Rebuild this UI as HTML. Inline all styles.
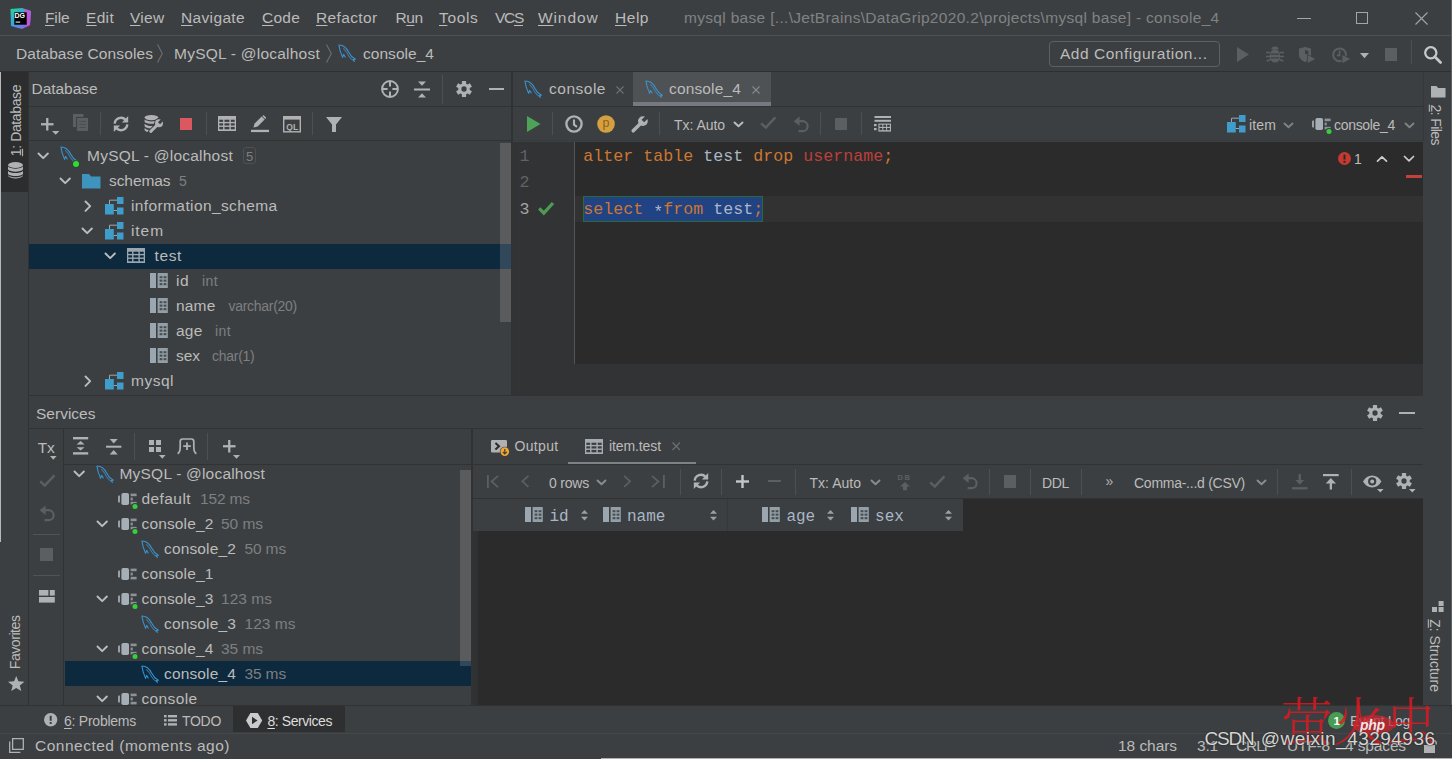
<!DOCTYPE html>
<html><head><meta charset="utf-8"><title>DataGrip</title>
<style>
html,body{margin:0;padding:0;background:#3c3f41;overflow:hidden}
#r{position:relative;width:1452px;height:759px;overflow:hidden;background:#3c3f41}
#r>div,#r>span,#r>svg{position:absolute}
#r>span{white-space:pre;line-height:20px;height:20px}
#r>svg{overflow:visible}
#r>span{text-underline-offset:2px}
u{text-decoration:underline;text-underline-offset:inherit;text-decoration-thickness:1px}
</style></head><body><div id="r">
<div style="left:0px;top:35px;width:1452px;height:1px;background:#4f5254;"></div>
<div style="left:0px;top:71px;width:1452px;height:1px;background:#2d2f30;"></div>
<div style="left:0px;top:72px;width:28px;height:633px;background:#3c3f41;"></div>
<div style="left:28px;top:72px;width:1px;height:633px;background:#323232;"></div>
<div style="left:0px;top:72px;width:28px;height:120px;background:#2b2d2e;"></div>
<div style="left:1423px;top:72px;width:1px;height:69px;background:#353739;"></div>
<div style="left:29px;top:106px;width:483px;height:1px;background:#323232;"></div>
<div style="left:29px;top:140px;width:483px;height:1px;background:#323232;"></div>
<div style="left:29px;top:244px;width:483px;height:25px;background:#0d293e;"></div>
<div style="left:500px;top:143px;width:10.5px;height:179px;background:rgba(255,255,255,0.15);"></div>
<div style="left:511px;top:72px;width:2px;height:324px;background:#323232;"></div>
<div style="left:633px;top:72px;width:138px;height:35px;background:#4e5254;"></div>
<div style="left:633px;top:102px;width:138px;height:4px;background:#747a80;"></div>
<div style="left:513px;top:106px;width:910px;height:1px;background:#323232;"></div>
<div style="left:513px;top:140px;width:910px;height:1px;background:#393c3e;"></div>
<div style="left:513px;top:141.5px;width:910px;height:222.5px;background:#2b2b2b;"></div>
<div style="left:513px;top:141.5px;width:61px;height:222.5px;background:#313335;"></div>
<div style="left:574px;top:141.5px;width:1px;height:222.5px;background:#555555;"></div>
<div style="left:575px;top:195.5px;width:848px;height:26px;background:#323232;"></div>
<div style="left:583px;top:195.5px;width:180px;height:26px;background:#214283;box-shadow:inset 0 0 0 1px #2b6a38"></div>
<div style="left:1406px;top:175px;width:16px;height:3px;background:#c4403c;"></div>
<div style="left:513px;top:364px;width:910px;height:32px;background:#313335;"></div>
<div style="left:29px;top:395px;width:1394px;height:1px;background:#323232;"></div>
<div style="left:29px;top:428px;width:1394px;height:1px;background:#323232;"></div>
<div style="left:63px;top:429px;width:1px;height:276px;background:#323232;"></div>
<div style="left:64px;top:464px;width:408px;height:1px;background:#323232;"></div>
<div style="left:33px;top:534px;width:27px;height:1px;background:#515456;"></div>
<div style="left:33px;top:575px;width:27px;height:1px;background:#515456;"></div>
<div style="left:65px;top:661px;width:406px;height:25px;background:#0d293e;"></div>
<div style="left:460px;top:470px;width:10.5px;height:196px;background:rgba(255,255,255,0.15);"></div>
<div style="left:471px;top:429px;width:2px;height:276px;background:#323232;"></div>
<div style="left:473px;top:464px;width:950px;height:1px;background:#323232;"></div>
<div style="left:568px;top:461.6px;width:128px;height:2.6px;background:#7d8285;"></div>
<div style="left:473px;top:498px;width:950px;height:1px;background:#323232;"></div>
<div style="left:473px;top:499px;width:950px;height:206px;background:#2b2b2b;"></div>
<div style="left:473px;top:499px;width:490px;height:32px;background:#3c3f41;"></div>
<div style="left:727px;top:499px;width:1px;height:32px;background:#36393b;"></div>
<div style="left:473px;top:531px;width:5px;height:174px;background:#2f3133;"></div>
<div style="left:0px;top:705px;width:1452px;height:1px;background:#323232;"></div>
<div style="left:232.5px;top:706px;width:112px;height:26px;background:#2d2f30;"></div>
<div style="left:0px;top:732.5px;width:1452px;height:1px;background:#45484a;"></div>
<div style="left:1049px;top:40.5px;width:170.5px;height:26.5px;background:transparent;border:1px solid #5e6163;border-radius:4px;box-sizing:border-box"></div>
<div style="left:243px;top:147px;width:13px;height:17px;background:transparent;border:1px solid #4e5153;border-radius:3px;box-sizing:border-box"></div>
<div style="left:0px;top:72px;width:1px;height:470px;background:#b5b9bb;"></div>
<div style="left:601px;top:757.6px;width:851px;height:1.4px;background:#b0b0b0;"></div>
<div style="left:1450.5px;top:0px;width:1.5px;height:705px;background:#5e6163;"></div>
<div style="left:1297px;top:18.3px;width:13.7px;height:1px;background:#a3a5a7;"></div>
<div style="left:1355.7px;top:11.7px;width:12.4px;height:12.4px;background:transparent;border:1px solid #a3a5a7;box-sizing:border-box"></div>
<div style="left:1384.5px;top:48px;width:12.5px;height:12.5px;background:#5c5f61;"></div>
<div style="left:1411px;top:40px;width:1px;height:24px;background:#4d5052;"></div>
<div style="left:442px;top:75px;width:1px;height:29px;background:#4d5052;"></div>
<div style="left:488.5px;top:88px;width:15.5px;height:2px;background:#afb1b3;"></div>
<div style="left:100px;top:112px;width:1px;height:23px;background:#4d5052;"></div>
<div style="left:180px;top:117.8px;width:12.3px;height:12.3px;background:#db5860;"></div>
<div style="left:206px;top:112px;width:1px;height:23px;background:#4d5052;"></div>
<div style="left:312px;top:112px;width:1px;height:23px;background:#4d5052;"></div>
<div style="left:552px;top:112px;width:1px;height:23px;background:#4d5052;"></div>
<div style="left:659px;top:112px;width:1px;height:23px;background:#4d5052;"></div>
<div style="left:820px;top:112px;width:1px;height:23px;background:#4d5052;"></div>
<div style="left:835px;top:117.8px;width:12.3px;height:12.3px;background:#5c5f61;"></div>
<div style="left:861px;top:112px;width:1px;height:23px;background:#4d5052;"></div>
<div style="left:1399px;top:412px;width:15.7px;height:2px;background:#afb1b3;"></div>
<div style="left:39.6px;top:548.4px;width:13px;height:12.6px;background:#5c5f61;"></div>
<div style="left:134px;top:433px;width:1px;height:27px;background:#4d5052;"></div>
<div style="left:207px;top:433px;width:1px;height:27px;background:#4d5052;"></div>
<div style="left:29px;top:705px;width:1423px;height:1px;background:#323232;"></div>
<div style="left:680px;top:469px;width:1px;height:26px;background:#4d5052;"></div>
<div style="left:721px;top:469px;width:1px;height:26px;background:#4d5052;"></div>
<div style="left:768px;top:480.3px;width:13.4px;height:2.2px;background:#5c5f61;"></div>
<div style="left:795px;top:469px;width:1px;height:26px;background:#4d5052;"></div>
<div style="left:989px;top:469px;width:1px;height:26px;background:#4d5052;"></div>
<div style="left:1003.6px;top:475.3px;width:12.6px;height:12.3px;background:#5c5f61;"></div>
<div style="left:1030px;top:469px;width:1px;height:26px;background:#4d5052;"></div>
<div style="left:1081px;top:469px;width:1px;height:26px;background:#4d5052;"></div>
<div style="left:1277px;top:469px;width:1px;height:26px;background:#4d5052;"></div>
<div style="left:1351px;top:469px;width:1px;height:26px;background:#4d5052;"></div>
<svg style="left:9.5px;top:7.5px;" width="21" height="21" viewBox="0 0 21 21"><defs><linearGradient id="dg1" x1="0" y1="0" x2="1" y2="1"><stop offset="0" stop-color="#22d88f"/><stop offset="0.5" stop-color="#3f9be6"/><stop offset="1" stop-color="#b44ee0"/></linearGradient></defs>
<path d="M0.5 1 L12 0 L21 3 L20 17 L12 21 L1 18 Z" fill="url(#dg1)"/><path d="M14 1 L21 3 L20 17 L16 19 Z" fill="#d04fd4" opacity="0.8"/>
<rect x="4.3" y="4.3" width="12.4" height="12.4" fill="#000"/><rect x="5.6" y="13.6" width="4.6" height="1" fill="#fff"/></svg>
<svg style="left:157px;top:44px;" width="6" height="19" viewBox="0 0 6 19"><path d="M0.5 0.5 L5.3 9.5 L0.5 18.5" fill="none" stroke="#6c6f71" stroke-width="1.1"/></svg>
<svg style="left:325.5px;top:44px;" width="6" height="19" viewBox="0 0 6 19"><path d="M0.5 0.5 L5.3 9.5 L0.5 18.5" fill="none" stroke="#6c6f71" stroke-width="1.1"/></svg>
<svg style="left:337.5px;top:43.5px;" width="18" height="18" viewBox="0 0 18 18"><g fill="none" stroke="#3b93cf" stroke-width="1.05" stroke-linecap="round" stroke-linejoin="round"><path d="M1 1 C5 1 8.6 4 10.6 8 C12 11 14 13.4 17.4 15.2 L15 15.4 L16.4 17.2"/><path d="M1 1.4 C1.4 5 2.6 9 4.6 13.4 L5.6 10.4 L7.2 13"/><path d="M5.6 4.6 C8 6.6 9.4 9.4 10.8 12 C12.2 14.2 14 16 16.4 17.2" opacity="0.75"/></g></svg>
<svg style="left:1414.5px;top:11.6px;" width="13" height="13" viewBox="0 0 13 13"><path d="M0.5 0.5 L12.5 12.5 M12.5 0.5 L0.5 12.5" stroke="#a3a5a7" stroke-width="1.1" fill="none"/></svg>
<svg style="left:1237px;top:46.5px;" width="12" height="15" viewBox="0 0 12 15"><path d="M0 0 L12 7.5 L0 15 Z" fill="#5c5f61"/></svg>
<svg style="left:1265.5px;top:45.5px;" width="18" height="17" viewBox="0 0 18 17"><g fill="#5c5f61"><ellipse cx="9" cy="10" rx="5.2" ry="6.6"/><path d="M5.4 3.6 A3.6 3 0 0 1 12.6 3.6 Z"/></g><g stroke="#5c5f61" stroke-width="1.6" fill="none"><path d="M0 6.5 H4 M14 6.5 H18 M0 10.5 H4 M14 10.5 H18 M0.6 15 L4.6 13.4 M17.4 15 L13.4 13.4"/></g><path d="M5 8.2 H13 M5 11.8 H13" stroke="#3c3f41" stroke-width="1.2"/></svg>
<svg style="left:1298px;top:47px;" width="18" height="16.5" viewBox="0 0 18 16.5"><path d="M1 1.6 L7 0 L13 1.6 V8 C13 11 10.4 13.6 7 15 C3.6 13.6 1 11 1 8 Z" fill="#5c5f61"/><path d="M7 3 L10.4 4 V7 H7 Z" fill="#3c3f41"/><path d="M9.4 7.4 L18 12 L9.4 16.5 Z" fill="#5c5f61" stroke="#3c3f41" stroke-width="0.8"/></svg>
<svg style="left:1331.5px;top:46.5px;" width="19" height="17" viewBox="0 0 19 17"><circle cx="7.6" cy="7.8" r="6.4" fill="none" stroke="#5c5f61" stroke-width="2"/><path d="M7.6 3.6 V8.4 H4.8" fill="none" stroke="#5c5f61" stroke-width="1.6"/><path d="M10 7.4 L19 12 L10 16.8 Z" fill="#5c5f61" stroke="#3c3f41" stroke-width="0.8"/></svg>
<svg style="left:1359.5px;top:52.5px;" width="9" height="5.2" viewBox="0 0 9 5.2"><path d="M0 0 H9 L4.5 5.2 Z" fill="#afb1b3"/></svg>
<svg style="left:1422.5px;top:44.5px;" width="20" height="20" viewBox="0 0 20 20"><circle cx="7.8" cy="7.8" r="5.6" fill="none" stroke="#c6c8ca" stroke-width="2.3"/><path d="M11.8 11.8 L17.6 17.4" stroke="#c6c8ca" stroke-width="2.8" stroke-linecap="round"/></svg>
<svg style="left:381px;top:80px;" width="18" height="18" viewBox="0 0 18 18"><circle cx="9" cy="9" r="7.9" fill="none" stroke="#afb1b3" stroke-width="2"/><path d="M9 1 V6.6 M9 11.4 V17 M1 9 H6.6 M11.4 9 H17" stroke="#afb1b3" stroke-width="2"/></svg>
<svg style="left:414px;top:80.5px;" width="16" height="17" viewBox="0 0 16 17"><rect x="0" y="7.5" width="16" height="2" fill="#afb1b3"/><path d="M4 0.5 H12 L8 4.8 Z" fill="#afb1b3"/><path d="M4 16.5 H12 L8 12.2 Z" fill="#afb1b3"/></svg>
<svg style="left:456px;top:81px;" width="16" height="16" viewBox="0 0 16 16"><g transform="translate(8,8)"><rect x="-2.1" y="-8" width="4.2" height="8" rx="0.6" transform="rotate(0)" fill="#afb1b3"/><rect x="-2.1" y="-8" width="4.2" height="8" rx="0.6" transform="rotate(60)" fill="#afb1b3"/><rect x="-2.1" y="-8" width="4.2" height="8" rx="0.6" transform="rotate(120)" fill="#afb1b3"/><rect x="-2.1" y="-8" width="4.2" height="8" rx="0.6" transform="rotate(180)" fill="#afb1b3"/><rect x="-2.1" y="-8" width="4.2" height="8" rx="0.6" transform="rotate(240)" fill="#afb1b3"/><rect x="-2.1" y="-8" width="4.2" height="8" rx="0.6" transform="rotate(300)" fill="#afb1b3"/><circle r="5.76" fill="#afb1b3"/><circle r="2.64" fill="#3c3f41"/></g></svg>
<svg style="left:40.75px;top:117.95px;" width="12.5" height="12.5" viewBox="0 0 12.5 12.5"><rect x="0" y="5.1" width="12.5" height="2.3" fill="#afb1b3"/><rect x="5.1" y="0" width="2.3" height="12.5" fill="#afb1b3"/></svg>
<svg style="left:52px;top:131.2px;" width="7.4" height="3.8" viewBox="0 0 7.4 3.8"><path d="M0 0 H7.4 L3.7 3.8 Z" fill="#afb1b3"/></svg>
<svg style="left:72.5px;top:114px;" width="16" height="17.5" viewBox="0 0 16 17.5"><rect x="0" y="0" width="10.5" height="13" fill="#5c5f61"/><rect x="3.6" y="3.4" width="12" height="14" fill="#5c5f61" stroke="#3c3f41" stroke-width="1"/><path d="M6.4 7.4 H13 M6.4 10.4 H13 M6.4 13.4 H13" stroke="#494c4e" stroke-width="1"/></svg>
<svg style="left:112px;top:115.2px;" width="18" height="18" viewBox="0 0 18 18"><g fill="none" stroke="#afb1b3" stroke-width="2.4"><path d="M2.7 8.6 A6.3 6.3 0 0 1 13.6 4.9"/><path d="M15.3 9.4 A6.3 6.3 0 0 1 4.4 13.1"/></g><path d="M9.9 7.4 H16.2 V1.1 Z" fill="#afb1b3"/><path d="M8.1 10.6 H1.8 V16.9 Z" fill="#afb1b3"/></svg>
<svg style="left:144px;top:114.5px;" width="20" height="18" viewBox="0 0 20 18"><g fill="#afb1b3"><ellipse cx="7.4" cy="2.6" rx="6.8" ry="2.6"/><path d="M0.6 4.6 C3 7 11.8 7 14.2 4.6 V7 C11.8 9.4 3 9.4 0.6 7 Z"/><path d="M0.6 8.8 C2.6 10.8 6.4 11.4 9 11 L6.6 13.4 C4 13.4 1.6 12.6 0.6 11.2 Z"/><path d="M0.6 13 C1.8 14.2 3.4 14.9 5 15.1 L3.4 16.9 C2.2 16.7 1.2 16.1 0.6 15.3 Z"/></g><path d="M6.6 16.6 L13 10.2" stroke="#3c3f41" stroke-width="4.6" stroke-linecap="round"/><circle cx="15" cy="8.2" r="4.9" fill="#3c3f41"/><path d="M6.8 16.4 L13 10.2" stroke="#afb1b3" stroke-width="3" stroke-linecap="round"/><circle cx="15" cy="8.2" r="4" fill="#afb1b3"/><path d="M15 8.2 L20.4 2.8" stroke="#3c3f41" stroke-width="3"/></svg>
<svg style="left:218.2px;top:116.3px;" width="18" height="15" viewBox="0 0 18 15"><rect x="0" y="0" width="18" height="15" fill="#afb1b3"/><rect x="1.3" y="3.7" width="3.8" height="2.2" fill="#3c3f41"/><rect x="6.5" y="3.7" width="4.9" height="2.2" fill="#3c3f41"/><rect x="12.8" y="3.7" width="3.9" height="2.2" fill="#3c3f41"/><rect x="1.3" y="7.3" width="3.8" height="2.2" fill="#3c3f41"/><rect x="6.5" y="7.3" width="4.9" height="2.2" fill="#3c3f41"/><rect x="12.8" y="7.3" width="3.9" height="2.2" fill="#3c3f41"/><rect x="1.3" y="10.9" width="3.8" height="2.4" fill="#3c3f41"/><rect x="6.5" y="10.9" width="4.9" height="2.4" fill="#3c3f41"/><rect x="12.8" y="10.9" width="3.9" height="2.4" fill="#3c3f41"/></svg>
<svg style="left:251px;top:115px;" width="18" height="17.5" viewBox="0 0 18 17.5"><path d="M2.4 12.6 L3.6 8.6 L10.6 1.6 L13.6 4.6 L6.6 11.6 Z" fill="#afb1b3"/><path d="M11.6 0.7 A1.1 1.1 0 0 1 13.2 0.7 L14.6 2.1 A1.1 1.1 0 0 1 14.6 3.7 L14.2 4.1 L11.2 1.1 Z" fill="#afb1b3"/><rect x="0" y="14.8" width="18" height="2.3" fill="#afb1b3"/></svg>
<svg style="left:283px;top:116px;" width="18" height="16.5" viewBox="0 0 18 16.5"><rect x="0" y="0" width="18" height="16.5" fill="#afb1b3"/><rect x="1.4" y="3.6" width="15.2" height="11.5" fill="#3c3f41"/></svg>
<svg style="left:326px;top:116.5px;" width="16" height="15" viewBox="0 0 16 15"><path d="M0 0 H16 L10 7.4 V15 H6 V7.4 Z" fill="#afb1b3"/></svg>
<svg style="left:38.3px;top:152.7px;" width="10.4" height="6" viewBox="0 0 10.4 6"><path d="M0.5 0.5 L5.2 5.2 L9.9 0.5" fill="none" stroke="#bbbdbf" stroke-width="1.9" stroke-linecap="round" stroke-linejoin="round"/></svg>
<svg style="left:60px;top:146.2px;" width="18" height="18" viewBox="0 0 18 18"><g fill="none" stroke="#3b93cf" stroke-width="1.05" stroke-linecap="round" stroke-linejoin="round"><path d="M1 1 C5 1 8.6 4 10.6 8 C12 11 14 13.4 17.4 15.2 L15 15.4 L16.4 17.2"/><path d="M1 1.4 C1.4 5 2.6 9 4.6 13.4 L5.6 10.4 L7.2 13"/><path d="M5.6 4.6 C8 6.6 9.4 9.4 10.8 12 C12.2 14.2 14 16 16.4 17.2" opacity="0.75"/></g></svg>
<svg style="left:72px;top:159.7px;" width="8" height="8" viewBox="0 0 8 8"><circle cx="4" cy="4" r="3.8" fill="#3c3f41"/><circle cx="4" cy="4" r="3" fill="#2be02b"/></svg>
<svg style="left:60.3px;top:177.7px;" width="10.4" height="6" viewBox="0 0 10.4 6"><path d="M0.5 0.5 L5.2 5.2 L9.9 0.5" fill="none" stroke="#bbbdbf" stroke-width="1.9" stroke-linecap="round" stroke-linejoin="round"/></svg>
<svg style="left:81.7px;top:173.5px;" width="18.5" height="14.4" viewBox="0 0 18.5 14.4"><path d="M0 0 H7 L9.2 2.5 H18.5 V14.4 H0 Z" fill="#3e94bd"/></svg>
<svg style="left:84.5px;top:200.5px;" width="6" height="10.4" viewBox="0 0 6 10.4"><path d="M0.5 0.5 L5.2 5.2 L0.5 9.9" fill="none" stroke="#bbbdbf" stroke-width="1.9" stroke-linecap="round" stroke-linejoin="round"/></svg>
<svg style="left:105px;top:197.0px;" width="18.5" height="17.5" viewBox="0 0 18.5 17.5"><rect x="12" y="0" width="6.5" height="7" fill="#3f9dcc"/><rect x="0" y="7" width="8.8" height="10.5" fill="#3f9dcc"/><rect x="12" y="10.5" width="6.5" height="7" fill="#3f9dcc"/><path d="M4.5 7 V3.2 H12 M8.8 13.5 H12" fill="none" stroke="#9aa7b0" stroke-width="1"/></svg>
<svg style="left:82.3px;top:227.7px;" width="10.4" height="6" viewBox="0 0 10.4 6"><path d="M0.5 0.5 L5.2 5.2 L9.9 0.5" fill="none" stroke="#bbbdbf" stroke-width="1.9" stroke-linecap="round" stroke-linejoin="round"/></svg>
<svg style="left:105px;top:222.0px;" width="18.5" height="17.5" viewBox="0 0 18.5 17.5"><rect x="12" y="0" width="6.5" height="7" fill="#3f9dcc"/><rect x="0" y="7" width="8.8" height="10.5" fill="#3f9dcc"/><rect x="12" y="10.5" width="6.5" height="7" fill="#3f9dcc"/><path d="M4.5 7 V3.2 H12 M8.8 13.5 H12" fill="none" stroke="#9aa7b0" stroke-width="1"/></svg>
<svg style="left:104.6px;top:252.7px;" width="10.4" height="6" viewBox="0 0 10.4 6"><path d="M0.5 0.5 L5.2 5.2 L9.9 0.5" fill="none" stroke="#bbbdbf" stroke-width="1.9" stroke-linecap="round" stroke-linejoin="round"/></svg>
<svg style="left:127px;top:247.89999999999998px;" width="18" height="15" viewBox="0 0 18 15"><rect x="0" y="0" width="18" height="15" fill="#9aa7b0"/><rect x="1.3" y="3.7" width="3.8" height="2.2" fill="#0d293e"/><rect x="6.5" y="3.7" width="4.9" height="2.2" fill="#0d293e"/><rect x="12.8" y="3.7" width="3.9" height="2.2" fill="#0d293e"/><rect x="1.3" y="7.3" width="3.8" height="2.2" fill="#0d293e"/><rect x="6.5" y="7.3" width="4.9" height="2.2" fill="#0d293e"/><rect x="12.8" y="7.3" width="3.9" height="2.2" fill="#0d293e"/><rect x="1.3" y="10.9" width="3.8" height="2.4" fill="#0d293e"/><rect x="6.5" y="10.9" width="4.9" height="2.4" fill="#0d293e"/><rect x="12.8" y="10.9" width="3.9" height="2.4" fill="#0d293e"/></svg>
<svg style="left:150px;top:272.9px;" width="18" height="15" viewBox="0 0 18 15"><rect x="0" y="0" width="6" height="15" fill="#9aa7b0"/><rect x="7.6" y="0" width="10.2" height="15" fill="#9aa7b0" opacity="0.92"/><rect x="9.6" y="3.2" width="2.8" height="2" fill="#3c3f41" opacity="0.85"/><rect x="13.6" y="3.2" width="2.8" height="2" fill="#3c3f41" opacity="0.85"/><rect x="9.6" y="6.6" width="2.8" height="2.1" fill="#3c3f41" opacity="0.85"/><rect x="13.6" y="6.6" width="2.8" height="2.1" fill="#3c3f41" opacity="0.85"/><rect x="9.6" y="10.1" width="2.8" height="2.1" fill="#3c3f41" opacity="0.85"/><rect x="13.6" y="10.1" width="2.8" height="2.1" fill="#3c3f41" opacity="0.85"/></svg>
<svg style="left:150px;top:297.9px;" width="18" height="15" viewBox="0 0 18 15"><rect x="0" y="0" width="6" height="15" fill="#9aa7b0"/><rect x="7.6" y="0" width="10.2" height="15" fill="#9aa7b0" opacity="0.92"/><rect x="9.6" y="3.2" width="2.8" height="2" fill="#3c3f41" opacity="0.85"/><rect x="13.6" y="3.2" width="2.8" height="2" fill="#3c3f41" opacity="0.85"/><rect x="9.6" y="6.6" width="2.8" height="2.1" fill="#3c3f41" opacity="0.85"/><rect x="13.6" y="6.6" width="2.8" height="2.1" fill="#3c3f41" opacity="0.85"/><rect x="9.6" y="10.1" width="2.8" height="2.1" fill="#3c3f41" opacity="0.85"/><rect x="13.6" y="10.1" width="2.8" height="2.1" fill="#3c3f41" opacity="0.85"/></svg>
<svg style="left:150px;top:322.9px;" width="18" height="15" viewBox="0 0 18 15"><rect x="0" y="0" width="6" height="15" fill="#9aa7b0"/><rect x="7.6" y="0" width="10.2" height="15" fill="#9aa7b0" opacity="0.92"/><rect x="9.6" y="3.2" width="2.8" height="2" fill="#3c3f41" opacity="0.85"/><rect x="13.6" y="3.2" width="2.8" height="2" fill="#3c3f41" opacity="0.85"/><rect x="9.6" y="6.6" width="2.8" height="2.1" fill="#3c3f41" opacity="0.85"/><rect x="13.6" y="6.6" width="2.8" height="2.1" fill="#3c3f41" opacity="0.85"/><rect x="9.6" y="10.1" width="2.8" height="2.1" fill="#3c3f41" opacity="0.85"/><rect x="13.6" y="10.1" width="2.8" height="2.1" fill="#3c3f41" opacity="0.85"/></svg>
<svg style="left:150px;top:347.9px;" width="18" height="15" viewBox="0 0 18 15"><rect x="0" y="0" width="6" height="15" fill="#9aa7b0"/><rect x="7.6" y="0" width="10.2" height="15" fill="#9aa7b0" opacity="0.92"/><rect x="9.6" y="3.2" width="2.8" height="2" fill="#3c3f41" opacity="0.85"/><rect x="13.6" y="3.2" width="2.8" height="2" fill="#3c3f41" opacity="0.85"/><rect x="9.6" y="6.6" width="2.8" height="2.1" fill="#3c3f41" opacity="0.85"/><rect x="13.6" y="6.6" width="2.8" height="2.1" fill="#3c3f41" opacity="0.85"/><rect x="9.6" y="10.1" width="2.8" height="2.1" fill="#3c3f41" opacity="0.85"/><rect x="13.6" y="10.1" width="2.8" height="2.1" fill="#3c3f41" opacity="0.85"/></svg>
<svg style="left:84.5px;top:375.5px;" width="6" height="10.4" viewBox="0 0 6 10.4"><path d="M0.5 0.5 L5.2 5.2 L0.5 9.9" fill="none" stroke="#bbbdbf" stroke-width="1.9" stroke-linecap="round" stroke-linejoin="round"/></svg>
<svg style="left:105px;top:372.0px;" width="18.5" height="17.5" viewBox="0 0 18.5 17.5"><rect x="12" y="0" width="6.5" height="7" fill="#3f9dcc"/><rect x="0" y="7" width="8.8" height="10.5" fill="#3f9dcc"/><rect x="12" y="10.5" width="6.5" height="7" fill="#3f9dcc"/><path d="M4.5 7 V3.2 H12 M8.8 13.5 H12" fill="none" stroke="#9aa7b0" stroke-width="1"/></svg>
<svg style="left:524px;top:79.5px;" width="18" height="18" viewBox="0 0 18 18"><g fill="none" stroke="#3b93cf" stroke-width="1.05" stroke-linecap="round" stroke-linejoin="round"><path d="M1 1 C5 1 8.6 4 10.6 8 C12 11 14 13.4 17.4 15.2 L15 15.4 L16.4 17.2"/><path d="M1 1.4 C1.4 5 2.6 9 4.6 13.4 L5.6 10.4 L7.2 13"/><path d="M5.6 4.6 C8 6.6 9.4 9.4 10.8 12 C12.2 14.2 14 16 16.4 17.2" opacity="0.75"/></g></svg>
<svg style="left:645px;top:79.5px;" width="18" height="18" viewBox="0 0 18 18"><g fill="none" stroke="#3b93cf" stroke-width="1.05" stroke-linecap="round" stroke-linejoin="round"><path d="M1 1 C5 1 8.6 4 10.6 8 C12 11 14 13.4 17.4 15.2 L15 15.4 L16.4 17.2"/><path d="M1 1.4 C1.4 5 2.6 9 4.6 13.4 L5.6 10.4 L7.2 13"/><path d="M5.6 4.6 C8 6.6 9.4 9.4 10.8 12 C12.2 14.2 14 16 16.4 17.2" opacity="0.75"/></g></svg>
<svg style="left:616.0px;top:85.5px;" width="8" height="8" viewBox="0 0 8 8"><path d="M0.5 0.5 L7.5 7.5 M7.5 0.5 L0.5 7.5" stroke="#6e7173" stroke-width="1.1" fill="none"/></svg>
<svg style="left:752.0px;top:85.5px;" width="8" height="8" viewBox="0 0 8 8"><path d="M0.5 0.5 L7.5 7.5 M7.5 0.5 L0.5 7.5" stroke="#878a8c" stroke-width="1.1" fill="none"/></svg>
<svg style="left:526.5px;top:116px;" width="13.5" height="16" viewBox="0 0 13.5 16"><path d="M0 0 L13.5 8 L0 16 Z" fill="#4fa356"/></svg>
<svg style="left:565px;top:115.3px;" width="18" height="18" viewBox="0 0 18 18"><circle cx="9" cy="9" r="7.6" fill="none" stroke="#afb1b3" stroke-width="2.4"/><path d="M9 4.6 V9.6 L12 11.8" fill="none" stroke="#afb1b3" stroke-width="2.1"/></svg>
<svg style="left:597px;top:115.2px;" width="18" height="18" viewBox="0 0 18 18"><circle cx="9" cy="9" r="8.8" fill="#d5a040"/></svg>
<svg style="left:630.5px;top:115.5px;" width="17" height="17" viewBox="0 0 17 17"><path d="M2.2 14.8 L9.6 7.4" stroke="#afb1b3" stroke-width="3.5" stroke-linecap="round"/><circle cx="11.9" cy="5.1" r="4.9" fill="#afb1b3"/><path d="M11.9 5.1 L18.4 -1.4" stroke="#3c3f41" stroke-width="3.6"/></svg>
<svg style="left:734.0px;top:122.3px;" width="9" height="5" viewBox="0 0 9 5"><path d="M0.5 0.5 L4.5 4.2 L8.5 0.5" fill="none" stroke="#bbbdbf" stroke-width="1.9" stroke-linecap="round" stroke-linejoin="round"/></svg>
<svg style="left:759.5px;top:116.3px;" width="16.5" height="13" viewBox="0 0 16.5 13"><path d="M1.2 7.4 L5.8 11.6 L15.4 1.4" fill="none" stroke="#5c5f61" stroke-width="2.5" stroke-linejoin="miter"/></svg>
<svg style="left:792.5px;top:115.5px;" width="16.5" height="16.5" viewBox="0 0 16.5 16.5"><path d="M4 5.2 H9.6 A5 5 0 0 1 9.6 15.2 H5.6" fill="none" stroke="#5c5f61" stroke-width="2.2"/><path d="M6.6 0.4 V10 L0.6 5.2 Z" fill="#5c5f61"/></svg>
<svg style="left:874.3px;top:116px;" width="17" height="15.6" viewBox="0 0 17 15.6"><rect x="0.5" y="0" width="16.5" height="2" fill="#afb1b3"/><rect x="0.5" y="3.8" width="16.5" height="2" fill="#afb1b3"/><rect x="0" y="8" width="2.6" height="2.2" fill="#afb1b3"/><rect x="0" y="12" width="2.6" height="2.2" fill="#afb1b3"/><rect x="4.4" y="7.6" width="12.6" height="8" fill="#afb1b3"/><rect x="5.5" y="8.7" width="2.8" height="2.2" fill="#3c3f41"/><rect x="5.5" y="12" width="2.8" height="2.2" fill="#3c3f41"/><rect x="9.3" y="8.7" width="2.8" height="2.2" fill="#3c3f41"/><rect x="9.3" y="12" width="2.8" height="2.2" fill="#3c3f41"/><rect x="13.1" y="8.7" width="2.8" height="2.2" fill="#3c3f41"/><rect x="13.1" y="12" width="2.8" height="2.2" fill="#3c3f41"/></svg>
<svg style="left:1226.6px;top:114.8px;" width="18.5" height="17.5" viewBox="0 0 18.5 17.5"><rect x="12" y="0" width="6.5" height="7" fill="#3f9dcc"/><rect x="0" y="7" width="8.8" height="10.5" fill="#3f9dcc"/><rect x="12" y="10.5" width="6.5" height="7" fill="#3f9dcc"/><path d="M4.5 7 V3.2 H12 M8.8 13.5 H12" fill="none" stroke="#9aa7b0" stroke-width="1"/></svg>
<svg style="left:1284.0px;top:122.5px;" width="9" height="5" viewBox="0 0 9 5"><path d="M0.5 0.5 L4.5 4.2 L8.5 0.5" fill="none" stroke="#7f8284" stroke-width="1.9" stroke-linecap="round" stroke-linejoin="round"/></svg>
<svg style="left:1312px;top:118.3px;" width="19" height="12" viewBox="0 0 19 12"><path d="M0 3.2 Q0 2.4 0.9 2.4 H2 V9.6 H0.9 Q0 9.6 0 8.8 Z" fill="#9aa0a6"/><rect x="3.4" y="0" width="7.6" height="12" rx="1.8" fill="#a7afb6"/><rect x="12.6" y="0.6" width="6" height="2.6" fill="#8d9297"/><rect x="12.6" y="4.6" width="2.2" height="2.8" fill="#8d9297"/><rect x="12.6" y="8.8" width="6" height="2.6" fill="#8d9297"/><circle cx="17" cy="13.4" r="3.4" fill="#3c3f41"/><circle cx="17" cy="13.4" r="2.5" fill="#36d03a"/></svg>
<svg style="left:1405.0px;top:122.5px;" width="9" height="5" viewBox="0 0 9 5"><path d="M0.5 0.5 L4.5 4.2 L8.5 0.5" fill="none" stroke="#7f8284" stroke-width="1.9" stroke-linecap="round" stroke-linejoin="round"/></svg>
<svg style="left:538.4px;top:201px;" width="16.5" height="14" viewBox="0 0 16.5 14"><path d="M1.2 7.4 L5.8 12 L15 2" fill="none" stroke="#4e9a55" stroke-width="3.3"/></svg>
<svg style="left:1337.7px;top:151.5px;" width="13" height="13" viewBox="0 0 13 13"><circle cx="6.5" cy="6.5" r="6.5" fill="#c7382f"/><rect x="5.5" y="2.6" width="2" height="5" fill="#2b2b2b"/><rect x="5.5" y="8.8" width="2" height="2" fill="#2b2b2b"/></svg>
<svg style="left:1377.0px;top:156.0px;" width="10" height="5.6" viewBox="0 0 10 5.6"><path d="M0.5 5.1 L5.0 0.8 L9.5 5.1" fill="none" stroke="#cbcdcf" stroke-width="1.7" stroke-linecap="round" stroke-linejoin="round"/></svg>
<svg style="left:1404.0px;top:156.0px;" width="10" height="5.6" viewBox="0 0 10 5.6"><path d="M0.5 0.5 L5.0 4.8 L9.5 0.5" fill="none" stroke="#cbcdcf" stroke-width="1.7" stroke-linecap="round" stroke-linejoin="round"/></svg>
<svg style="left:8px;top:161.5px;" width="15" height="16.5" viewBox="0 0 15 16.5"><g fill="#afb1b3"><ellipse cx="7.5" cy="3" rx="7.5" ry="3"/><path d="M0 4.6 C2.5 7.4 12.5 7.4 15 4.6 V7.6 C12.5 10.4 2.5 10.4 0 7.6 Z"/><path d="M0 8.9 C2.5 11.7 12.5 11.7 15 8.9 V11.9 C12.5 14.7 2.5 14.7 0 11.9 Z"/><path d="M0 13.2 C2.5 16 12.5 16 15 13.2 V14 C12.5 17.2 2.5 17.2 0 14 Z"/></g></svg>
<svg style="left:7.5px;top:676px;" width="16.5" height="15" viewBox="0 0 16.5 15"><path d="M8.25 0 L10.4 5.2 L16.5 5.7 L11.8 9.4 L13.3 15 L8.25 11.9 L3.2 15 L4.7 9.4 L0 5.7 L6.1 5.2 Z" fill="#afb1b3"/></svg>
<svg style="left:1430.5px;top:86px;" width="14.5" height="11.5" viewBox="0 0 14.5 11.5"><path d="M0 0 H5.4 L7.2 2 H14.5 V11.5 H0 Z" fill="#afb1b3"/></svg>
<svg style="left:1432.4px;top:601px;" width="11.6" height="11" viewBox="0 0 11.6 11"><rect x="6.6" y="0" width="5" height="5" fill="#afb1b3"/><rect x="0" y="6" width="5" height="5" fill="#afb1b3"/><rect x="6.6" y="6" width="5" height="5" fill="#afb1b3"/></svg>
<svg style="left:1367px;top:404.8px;" width="16" height="16" viewBox="0 0 16 16"><g transform="translate(8,8)"><rect x="-2.1" y="-8" width="4.2" height="8" rx="0.6" transform="rotate(0)" fill="#afb1b3"/><rect x="-2.1" y="-8" width="4.2" height="8" rx="0.6" transform="rotate(60)" fill="#afb1b3"/><rect x="-2.1" y="-8" width="4.2" height="8" rx="0.6" transform="rotate(120)" fill="#afb1b3"/><rect x="-2.1" y="-8" width="4.2" height="8" rx="0.6" transform="rotate(180)" fill="#afb1b3"/><rect x="-2.1" y="-8" width="4.2" height="8" rx="0.6" transform="rotate(240)" fill="#afb1b3"/><rect x="-2.1" y="-8" width="4.2" height="8" rx="0.6" transform="rotate(300)" fill="#afb1b3"/><circle r="5.76" fill="#afb1b3"/><circle r="2.64" fill="#3c3f41"/></g></svg>
<svg style="left:50px;top:456px;" width="6.6" height="3.8" viewBox="0 0 6.6 3.8"><path d="M0 0 H6.6 L3.3 3.8 Z" fill="#afb1b3"/></svg>
<svg style="left:38.5px;top:474px;" width="16.5" height="13" viewBox="0 0 16.5 13"><path d="M1.2 7.4 L5.8 11.6 L15.4 1.4" fill="none" stroke="#5c5f61" stroke-width="2.5" stroke-linejoin="miter"/></svg>
<svg style="left:38.8px;top:505.3px;" width="16.5" height="16.5" viewBox="0 0 16.5 16.5"><path d="M4 5.2 H9.6 A5 5 0 0 1 9.6 15.2 H5.6" fill="none" stroke="#5c5f61" stroke-width="2.2"/><path d="M6.6 0.4 V10 L0.6 5.2 Z" fill="#5c5f61"/></svg>
<svg style="left:38.5px;top:589.5px;" width="15.8" height="12.6" viewBox="0 0 15.8 12.6"><rect x="0" y="0" width="9.4" height="5.6" fill="#afb1b3"/><rect x="10.8" y="0" width="5" height="5.6" fill="#afb1b3"/><rect x="0" y="7" width="15.8" height="5.6" fill="#afb1b3"/></svg>
<svg style="left:73.4px;top:437.2px;" width="15.2" height="17.8" viewBox="0 0 15.2 17.8"><rect x="0" y="0" width="15.2" height="2.4" fill="#afb1b3"/><rect x="0" y="15.2" width="15.2" height="2.4" fill="#afb1b3"/><path d="M3.6 7.4 H11.6 L7.6 4 Z" fill="#afb1b3"/><path d="M3.6 10.2 H11.6 L7.6 13.6 Z" fill="#afb1b3"/></svg>
<svg style="left:106.3px;top:438.5px;" width="15.4" height="15.4" viewBox="0 0 15.4 15.4"><rect x="0" y="6.7" width="15.4" height="2" fill="#afb1b3"/><path d="M3.7 0 H11.7 L7.7 4.4 Z" fill="#afb1b3"/><path d="M3.7 15.4 H11.7 L7.7 11 Z" fill="#afb1b3"/></svg>
<svg style="left:149.2px;top:440.3px;" width="12" height="12" viewBox="0 0 12 12"><rect x="0" y="0" width="5" height="5" fill="#afb1b3"/><rect x="0" y="7" width="5" height="5" fill="#afb1b3"/><rect x="7" y="0" width="5" height="5" fill="#afb1b3"/><rect x="7" y="7" width="5" height="5" fill="#afb1b3"/></svg>
<svg style="left:159.3px;top:454.5px;" width="6.6" height="3.8" viewBox="0 0 6.6 3.8"><path d="M0 0 H6.6 L3.3 3.8 Z" fill="#afb1b3"/></svg>
<svg style="left:177px;top:438px;" width="20" height="16" viewBox="0 0 20 16"><path d="M0.6 15.6 C3.4 14.6 3.2 11 3.2 8 V3.4 Q3.2 1 5.6 1 H14.4 Q16.8 1 16.8 3.4 V8 C16.8 11 16.6 14.6 19.4 15.6" fill="none" stroke="#afb1b3" stroke-width="1.7"/><path d="M10 4.4 V12 M6.2 8.2 H13.8" stroke="#afb1b3" stroke-width="1.8"/></svg>
<svg style="left:222.95px;top:439.55px;" width="12.5" height="12.5" viewBox="0 0 12.5 12.5"><rect x="0" y="5.1" width="12.5" height="2.3" fill="#afb1b3"/><rect x="5.1" y="0" width="2.3" height="12.5" fill="#afb1b3"/></svg>
<svg style="left:232.5px;top:454.8px;" width="7" height="3.8" viewBox="0 0 7 3.8"><path d="M0 0 H7 L3.5 3.8 Z" fill="#afb1b3"/></svg>
<svg style="left:73.8px;top:470.5px;" width="10.4" height="6" viewBox="0 0 10.4 6"><path d="M0.5 0.5 L5.2 5.2 L9.9 0.5" fill="none" stroke="#bbbdbf" stroke-width="1.9" stroke-linecap="round" stroke-linejoin="round"/></svg>
<svg style="left:96px;top:464.5px;" width="18" height="18" viewBox="0 0 18 18"><g fill="none" stroke="#3b93cf" stroke-width="1.05" stroke-linecap="round" stroke-linejoin="round"><path d="M1 1 C5 1 8.6 4 10.6 8 C12 11 14 13.4 17.4 15.2 L15 15.4 L16.4 17.2"/><path d="M1 1.4 C1.4 5 2.6 9 4.6 13.4 L5.6 10.4 L7.2 13"/><path d="M5.6 4.6 C8 6.6 9.4 9.4 10.8 12 C12.2 14.2 14 16 16.4 17.2" opacity="0.75"/></g></svg>
<svg style="left:118px;top:492.7px;" width="19" height="12" viewBox="0 0 19 12"><path d="M0 3.2 Q0 2.4 0.9 2.4 H2 V9.6 H0.9 Q0 9.6 0 8.8 Z" fill="#9aa0a6"/><rect x="3.4" y="0" width="7.6" height="12" rx="1.8" fill="#a7afb6"/><rect x="12.6" y="0.6" width="6" height="2.6" fill="#8d9297"/><rect x="12.6" y="4.6" width="2.2" height="2.8" fill="#8d9297"/><rect x="12.6" y="8.8" width="6" height="2.6" fill="#8d9297"/><circle cx="17" cy="13.4" r="3.4" fill="#3c3f41"/><circle cx="17" cy="13.4" r="2.5" fill="#36d03a"/></svg>
<svg style="left:97.1px;top:520.5px;" width="10.4" height="6" viewBox="0 0 10.4 6"><path d="M0.5 0.5 L5.2 5.2 L9.9 0.5" fill="none" stroke="#bbbdbf" stroke-width="1.9" stroke-linecap="round" stroke-linejoin="round"/></svg>
<svg style="left:118px;top:517.7px;" width="19" height="12" viewBox="0 0 19 12"><path d="M0 3.2 Q0 2.4 0.9 2.4 H2 V9.6 H0.9 Q0 9.6 0 8.8 Z" fill="#9aa0a6"/><rect x="3.4" y="0" width="7.6" height="12" rx="1.8" fill="#a7afb6"/><rect x="12.6" y="0.6" width="6" height="2.6" fill="#8d9297"/><rect x="12.6" y="4.6" width="2.2" height="2.8" fill="#8d9297"/><rect x="12.6" y="8.8" width="6" height="2.6" fill="#8d9297"/><circle cx="17" cy="13.4" r="3.4" fill="#3c3f41"/><circle cx="17" cy="13.4" r="2.5" fill="#36d03a"/></svg>
<svg style="left:141px;top:539.5px;" width="18" height="18" viewBox="0 0 18 18"><g fill="none" stroke="#3b93cf" stroke-width="1.05" stroke-linecap="round" stroke-linejoin="round"><path d="M1 1 C5 1 8.6 4 10.6 8 C12 11 14 13.4 17.4 15.2 L15 15.4 L16.4 17.2"/><path d="M1 1.4 C1.4 5 2.6 9 4.6 13.4 L5.6 10.4 L7.2 13"/><path d="M5.6 4.6 C8 6.6 9.4 9.4 10.8 12 C12.2 14.2 14 16 16.4 17.2" opacity="0.75"/></g></svg>
<svg style="left:118px;top:567.7px;" width="19" height="12" viewBox="0 0 19 12"><path d="M0 3.2 Q0 2.4 0.9 2.4 H2 V9.6 H0.9 Q0 9.6 0 8.8 Z" fill="#9aa0a6"/><rect x="3.4" y="0" width="7.6" height="12" rx="1.8" fill="#a7afb6"/><rect x="12.6" y="0.6" width="6" height="2.6" fill="#8d9297"/><rect x="12.6" y="4.6" width="2.2" height="2.8" fill="#8d9297"/><rect x="12.6" y="8.8" width="6" height="2.6" fill="#8d9297"/></svg>
<svg style="left:97.1px;top:595.5px;" width="10.4" height="6" viewBox="0 0 10.4 6"><path d="M0.5 0.5 L5.2 5.2 L9.9 0.5" fill="none" stroke="#bbbdbf" stroke-width="1.9" stroke-linecap="round" stroke-linejoin="round"/></svg>
<svg style="left:118px;top:592.7px;" width="19" height="12" viewBox="0 0 19 12"><path d="M0 3.2 Q0 2.4 0.9 2.4 H2 V9.6 H0.9 Q0 9.6 0 8.8 Z" fill="#9aa0a6"/><rect x="3.4" y="0" width="7.6" height="12" rx="1.8" fill="#a7afb6"/><rect x="12.6" y="0.6" width="6" height="2.6" fill="#8d9297"/><rect x="12.6" y="4.6" width="2.2" height="2.8" fill="#8d9297"/><rect x="12.6" y="8.8" width="6" height="2.6" fill="#8d9297"/><circle cx="17" cy="13.4" r="3.4" fill="#3c3f41"/><circle cx="17" cy="13.4" r="2.5" fill="#36d03a"/></svg>
<svg style="left:141px;top:614.5px;" width="18" height="18" viewBox="0 0 18 18"><g fill="none" stroke="#3b93cf" stroke-width="1.05" stroke-linecap="round" stroke-linejoin="round"><path d="M1 1 C5 1 8.6 4 10.6 8 C12 11 14 13.4 17.4 15.2 L15 15.4 L16.4 17.2"/><path d="M1 1.4 C1.4 5 2.6 9 4.6 13.4 L5.6 10.4 L7.2 13"/><path d="M5.6 4.6 C8 6.6 9.4 9.4 10.8 12 C12.2 14.2 14 16 16.4 17.2" opacity="0.75"/></g></svg>
<svg style="left:97.1px;top:645.5px;" width="10.4" height="6" viewBox="0 0 10.4 6"><path d="M0.5 0.5 L5.2 5.2 L9.9 0.5" fill="none" stroke="#bbbdbf" stroke-width="1.9" stroke-linecap="round" stroke-linejoin="round"/></svg>
<svg style="left:118px;top:642.7px;" width="19" height="12" viewBox="0 0 19 12"><path d="M0 3.2 Q0 2.4 0.9 2.4 H2 V9.6 H0.9 Q0 9.6 0 8.8 Z" fill="#9aa0a6"/><rect x="3.4" y="0" width="7.6" height="12" rx="1.8" fill="#a7afb6"/><rect x="12.6" y="0.6" width="6" height="2.6" fill="#8d9297"/><rect x="12.6" y="4.6" width="2.2" height="2.8" fill="#8d9297"/><rect x="12.6" y="8.8" width="6" height="2.6" fill="#8d9297"/><circle cx="17" cy="13.4" r="3.4" fill="#3c3f41"/><circle cx="17" cy="13.4" r="2.5" fill="#36d03a"/></svg>
<svg style="left:141px;top:664.5px;" width="18" height="18" viewBox="0 0 18 18"><g fill="none" stroke="#3b93cf" stroke-width="1.05" stroke-linecap="round" stroke-linejoin="round"><path d="M1 1 C5 1 8.6 4 10.6 8 C12 11 14 13.4 17.4 15.2 L15 15.4 L16.4 17.2"/><path d="M1 1.4 C1.4 5 2.6 9 4.6 13.4 L5.6 10.4 L7.2 13"/><path d="M5.6 4.6 C8 6.6 9.4 9.4 10.8 12 C12.2 14.2 14 16 16.4 17.2" opacity="0.75"/></g></svg>
<svg style="left:97.1px;top:695.5px;" width="10.4" height="6" viewBox="0 0 10.4 6"><path d="M0.5 0.5 L5.2 5.2 L9.9 0.5" fill="none" stroke="#bbbdbf" stroke-width="1.9" stroke-linecap="round" stroke-linejoin="round"/></svg>
<svg style="left:118px;top:692.7px;" width="19" height="12" viewBox="0 0 19 12"><path d="M0 3.2 Q0 2.4 0.9 2.4 H2 V9.6 H0.9 Q0 9.6 0 8.8 Z" fill="#9aa0a6"/><rect x="3.4" y="0" width="7.6" height="12" rx="1.8" fill="#a7afb6"/><rect x="12.6" y="0.6" width="6" height="2.6" fill="#8d9297"/><rect x="12.6" y="4.6" width="2.2" height="2.8" fill="#8d9297"/><rect x="12.6" y="8.8" width="6" height="2.6" fill="#8d9297"/></svg>
<svg style="left:491px;top:440px;" width="20" height="17" viewBox="0 0 20 17"><rect x="0" y="0" width="16" height="12.4" rx="1.2" fill="#afb1b3"/><path d="M4.4 3 L8 6.2 L4.4 9.4" fill="none" stroke="#2b2b2b" stroke-width="2"/><circle cx="13.8" cy="11.6" r="4.9" fill="#3c3f41"/><circle cx="13.8" cy="11.6" r="4.3" fill="#f0a732"/><path d="M13.8 9 V13.6 M11.8 11.8 L13.8 13.8 L15.8 11.8" fill="none" stroke="#3c3f41" stroke-width="1.2"/></svg>
<svg style="left:585px;top:438.7px;" width="18" height="15" viewBox="0 0 18 15"><rect x="0" y="0" width="18" height="15" fill="#a4abb1"/><rect x="1.3" y="3.7" width="3.8" height="2.2" fill="#3c3f41"/><rect x="6.5" y="3.7" width="4.9" height="2.2" fill="#3c3f41"/><rect x="12.8" y="3.7" width="3.9" height="2.2" fill="#3c3f41"/><rect x="1.3" y="7.3" width="3.8" height="2.2" fill="#3c3f41"/><rect x="6.5" y="7.3" width="4.9" height="2.2" fill="#3c3f41"/><rect x="12.8" y="7.3" width="3.9" height="2.2" fill="#3c3f41"/><rect x="1.3" y="10.9" width="3.8" height="2.4" fill="#3c3f41"/><rect x="6.5" y="10.9" width="4.9" height="2.4" fill="#3c3f41"/><rect x="12.8" y="10.9" width="3.9" height="2.4" fill="#3c3f41"/></svg>
<svg style="left:671.75px;top:442.25px;" width="8.5" height="8.5" viewBox="0 0 8.5 8.5"><path d="M0.5 0.5 L8.0 8.0 M8.0 0.5 L0.5 8.0" stroke="#6e7173" stroke-width="1.1" fill="none"/></svg>
<svg style="left:487px;top:474.6px;" width="12" height="13" viewBox="0 0 12 13"><rect x="0" y="0" width="1.8" height="13" fill="#5c5f61"/><path d="M11 0.8 L4.6 6.5 L11 12.2" fill="none" stroke="#5c5f61" stroke-width="1.8"/></svg>
<svg style="left:521px;top:474.8px;" width="8.5" height="12.6" viewBox="0 0 8.5 12.6"><path d="M7.4 0.8 L1.4 6.3 L7.4 11.8" fill="none" stroke="#5c5f61" stroke-width="1.8"/></svg>
<svg style="left:596.5px;top:479.8px;" width="9" height="5" viewBox="0 0 9 5"><path d="M0.5 0.5 L4.5 4.2 L8.5 0.5" fill="none" stroke="#8a8d8f" stroke-width="1.9" stroke-linecap="round" stroke-linejoin="round"/></svg>
<svg style="left:623px;top:474.8px;" width="8.5" height="12.6" viewBox="0 0 8.5 12.6"><path d="M1.1 0.8 L7.1 6.3 L1.1 11.8" fill="none" stroke="#5c5f61" stroke-width="1.8"/></svg>
<svg style="left:651px;top:474.6px;" width="14" height="13" viewBox="0 0 14 13"><rect x="12" y="0" width="1.8" height="13" fill="#5c5f61"/><path d="M1 0.8 L7.4 6.5 L1 12.2" fill="none" stroke="#5c5f61" stroke-width="1.8"/></svg>
<svg style="left:692px;top:472.2px;" width="18" height="18" viewBox="0 0 18 18"><g fill="none" stroke="#afb1b3" stroke-width="2.4"><path d="M2.7 8.6 A6.3 6.3 0 0 1 13.6 4.9"/><path d="M15.3 9.4 A6.3 6.3 0 0 1 4.4 13.1"/></g><path d="M9.9 7.4 H16.2 V1.1 Z" fill="#afb1b3"/><path d="M8.1 10.6 H1.8 V16.9 Z" fill="#afb1b3"/></svg>
<svg style="left:735.7px;top:474.8px;" width="13" height="13" viewBox="0 0 13 13"><rect x="0" y="5.3" width="13" height="2.4" fill="#c4c6c8"/><rect x="5.3" y="0" width="2.4" height="13" fill="#c4c6c8"/></svg>
<svg style="left:870.5px;top:480.1px;" width="9" height="5" viewBox="0 0 9 5"><path d="M0.5 0.5 L4.5 4.2 L8.5 0.5" fill="none" stroke="#8a8d8f" stroke-width="1.9" stroke-linecap="round" stroke-linejoin="round"/></svg>
<svg style="left:899.5px;top:481.5px;" width="10" height="8.2" viewBox="0 0 10 8.2"><path d="M5 0 L10 4.6 H7 V8.2 H3 V4.6 H0 Z" fill="#5c5f61"/></svg>
<svg style="left:928.5px;top:474.8px;" width="16.5" height="13" viewBox="0 0 16.5 13"><path d="M1.2 7.4 L5.8 11.6 L15.4 1.4" fill="none" stroke="#5c5f61" stroke-width="2.5" stroke-linejoin="miter"/></svg>
<svg style="left:961.6px;top:473.4px;" width="16.5" height="16.5" viewBox="0 0 16.5 16.5"><path d="M4 5.2 H9.6 A5 5 0 0 1 9.6 15.2 H5.6" fill="none" stroke="#5c5f61" stroke-width="2.2"/><path d="M6.6 0.4 V10 L0.6 5.2 Z" fill="#5c5f61"/></svg>
<svg style="left:1256.5px;top:480.3px;" width="9" height="5" viewBox="0 0 9 5"><path d="M0.5 0.5 L4.5 4.2 L8.5 0.5" fill="none" stroke="#8a8d8f" stroke-width="1.9" stroke-linecap="round" stroke-linejoin="round"/></svg>
<svg style="left:1291.5px;top:473.6px;" width="15.5" height="15.4" viewBox="0 0 15.5 15.4"><path d="M6.6 0 H8.9 V6 H12.2 L7.75 10.8 L3.3 6 H6.6 Z" fill="#5c5f61"/><rect x="0" y="13.2" width="15.5" height="2.2" fill="#5c5f61"/></svg>
<svg style="left:1323px;top:473.6px;" width="15.7" height="15.6" viewBox="0 0 15.7 15.6"><rect x="0" y="0" width="15.7" height="2.2" fill="#afb1b3"/><path d="M7.85 4 L13 9.4 H9 V15.6 H6.7 V9.4 H2.7 Z" fill="#afb1b3"/></svg>
<svg style="left:1363px;top:474.8px;" width="18.4" height="12.8" viewBox="0 0 18.4 12.8"><path d="M0 6.4 C4 -1.6 14.4 -1.6 18.4 6.4 C14.4 14.4 4 14.4 0 6.4 Z" fill="#afb1b3"/><circle cx="9.2" cy="6.4" r="4.1" fill="#3c3f41"/><circle cx="9.2" cy="6.4" r="2" fill="#afb1b3"/></svg>
<svg style="left:1376.6px;top:489px;" width="6.6" height="3.6" viewBox="0 0 6.6 3.6"><path d="M0 0 H6.6 L3.3 3.6 Z" fill="#afb1b3"/></svg>
<svg style="left:1396.3px;top:472.7px;" width="16" height="16" viewBox="0 0 16 16"><g transform="translate(8,8)"><rect x="-2.1" y="-8" width="4.2" height="8" rx="0.6" transform="rotate(0)" fill="#afb1b3"/><rect x="-2.1" y="-8" width="4.2" height="8" rx="0.6" transform="rotate(60)" fill="#afb1b3"/><rect x="-2.1" y="-8" width="4.2" height="8" rx="0.6" transform="rotate(120)" fill="#afb1b3"/><rect x="-2.1" y="-8" width="4.2" height="8" rx="0.6" transform="rotate(180)" fill="#afb1b3"/><rect x="-2.1" y="-8" width="4.2" height="8" rx="0.6" transform="rotate(240)" fill="#afb1b3"/><rect x="-2.1" y="-8" width="4.2" height="8" rx="0.6" transform="rotate(300)" fill="#afb1b3"/><circle r="5.76" fill="#afb1b3"/><circle r="2.64" fill="#3c3f41"/></g></svg>
<svg style="left:1409.4px;top:489px;" width="6.6" height="3.6" viewBox="0 0 6.6 3.6"><path d="M0 0 H6.6 L3.3 3.6 Z" fill="#afb1b3"/></svg>
<svg style="left:525px;top:507.4px;" width="18" height="15" viewBox="0 0 18 15"><rect x="0" y="0" width="6" height="15" fill="#9aa7b0"/><rect x="7.6" y="0" width="10.2" height="15" fill="#9aa7b0" opacity="0.92"/><rect x="9.6" y="3.2" width="2.8" height="2" fill="#3c3f41" opacity="0.85"/><rect x="13.6" y="3.2" width="2.8" height="2" fill="#3c3f41" opacity="0.85"/><rect x="9.6" y="6.6" width="2.8" height="2.1" fill="#3c3f41" opacity="0.85"/><rect x="13.6" y="6.6" width="2.8" height="2.1" fill="#3c3f41" opacity="0.85"/><rect x="9.6" y="10.1" width="2.8" height="2.1" fill="#3c3f41" opacity="0.85"/><rect x="13.6" y="10.1" width="2.8" height="2.1" fill="#3c3f41" opacity="0.85"/></svg>
<svg style="left:603px;top:507.4px;" width="18" height="15" viewBox="0 0 18 15"><rect x="0" y="0" width="6" height="15" fill="#9aa7b0"/><rect x="7.6" y="0" width="10.2" height="15" fill="#9aa7b0" opacity="0.92"/><rect x="9.6" y="3.2" width="2.8" height="2" fill="#3c3f41" opacity="0.85"/><rect x="13.6" y="3.2" width="2.8" height="2" fill="#3c3f41" opacity="0.85"/><rect x="9.6" y="6.6" width="2.8" height="2.1" fill="#3c3f41" opacity="0.85"/><rect x="13.6" y="6.6" width="2.8" height="2.1" fill="#3c3f41" opacity="0.85"/><rect x="9.6" y="10.1" width="2.8" height="2.1" fill="#3c3f41" opacity="0.85"/><rect x="13.6" y="10.1" width="2.8" height="2.1" fill="#3c3f41" opacity="0.85"/></svg>
<svg style="left:762.4px;top:507.4px;" width="18" height="15" viewBox="0 0 18 15"><rect x="0" y="0" width="6" height="15" fill="#9aa7b0"/><rect x="7.6" y="0" width="10.2" height="15" fill="#9aa7b0" opacity="0.92"/><rect x="9.6" y="3.2" width="2.8" height="2" fill="#3c3f41" opacity="0.85"/><rect x="13.6" y="3.2" width="2.8" height="2" fill="#3c3f41" opacity="0.85"/><rect x="9.6" y="6.6" width="2.8" height="2.1" fill="#3c3f41" opacity="0.85"/><rect x="13.6" y="6.6" width="2.8" height="2.1" fill="#3c3f41" opacity="0.85"/><rect x="9.6" y="10.1" width="2.8" height="2.1" fill="#3c3f41" opacity="0.85"/><rect x="13.6" y="10.1" width="2.8" height="2.1" fill="#3c3f41" opacity="0.85"/></svg>
<svg style="left:851px;top:507.4px;" width="18" height="15" viewBox="0 0 18 15"><rect x="0" y="0" width="6" height="15" fill="#9aa7b0"/><rect x="7.6" y="0" width="10.2" height="15" fill="#9aa7b0" opacity="0.92"/><rect x="9.6" y="3.2" width="2.8" height="2" fill="#3c3f41" opacity="0.85"/><rect x="13.6" y="3.2" width="2.8" height="2" fill="#3c3f41" opacity="0.85"/><rect x="9.6" y="6.6" width="2.8" height="2.1" fill="#3c3f41" opacity="0.85"/><rect x="13.6" y="6.6" width="2.8" height="2.1" fill="#3c3f41" opacity="0.85"/><rect x="9.6" y="10.1" width="2.8" height="2.1" fill="#3c3f41" opacity="0.85"/><rect x="13.6" y="10.1" width="2.8" height="2.1" fill="#3c3f41" opacity="0.85"/></svg>
<svg style="left:580.5px;top:509.6px;" width="7" height="10.6" viewBox="0 0 7 10.6"><path d="M0 3.8 L3.5 0 L7 3.8 Z" fill="#9aa0a6"/><path d="M0 6.8 L3.5 10.6 L7 6.8 Z" fill="#9aa0a6"/></svg>
<svg style="left:710.3px;top:509.6px;" width="7" height="10.6" viewBox="0 0 7 10.6"><path d="M0 3.8 L3.5 0 L7 3.8 Z" fill="#9aa0a6"/><path d="M0 6.8 L3.5 10.6 L7 6.8 Z" fill="#9aa0a6"/></svg>
<svg style="left:827.3px;top:509.6px;" width="7" height="10.6" viewBox="0 0 7 10.6"><path d="M0 3.8 L3.5 0 L7 3.8 Z" fill="#9aa0a6"/><path d="M0 6.8 L3.5 10.6 L7 6.8 Z" fill="#9aa0a6"/></svg>
<svg style="left:945.3px;top:509.6px;" width="7" height="10.6" viewBox="0 0 7 10.6"><path d="M0 3.8 L3.5 0 L7 3.8 Z" fill="#9aa0a6"/><path d="M0 6.8 L3.5 10.6 L7 6.8 Z" fill="#9aa0a6"/></svg>
<svg style="left:44.1px;top:713.1px;" width="13.4" height="13.4" viewBox="0 0 13.4 13.4"><circle cx="6.7" cy="6.7" r="6.7" fill="#afb1b3"/><rect x="5.7" y="2.8" width="2" height="5" fill="#3c3f41"/><rect x="5.7" y="9" width="2" height="2" fill="#3c3f41"/></svg>
<svg style="left:163.7px;top:715.3px;" width="13" height="10.6" viewBox="0 0 13 10.6"><rect x="0" y="0" width="2.6" height="2.4" fill="#afb1b3"/><rect x="4" y="0" width="9" height="2.4" fill="#afb1b3"/><rect x="0" y="4.1" width="2.6" height="2.4" fill="#afb1b3"/><rect x="4" y="4.1" width="9" height="2.4" fill="#afb1b3"/><rect x="0" y="8.2" width="2.6" height="2.4" fill="#afb1b3"/><rect x="4" y="8.2" width="9" height="2.4" fill="#afb1b3"/></svg>
<svg style="left:246.2px;top:712.8px;" width="16.2" height="15" viewBox="0 0 16.2 15"><path d="M4.4 0 H11.8 L16.2 7.5 L11.8 15 H4.4 L0 7.5 Z" fill="#c9cbcd"/><path d="M6 3.8 L11.6 7.5 L6 11.2 Z" fill="#2d2f30"/></svg>
<svg style="left:8.5px;top:738.3px;" width="15" height="15" viewBox="0 0 15 15"><path d="M3.6 0.7 H14.3 V11.4 H3.6 Z M0.7 3.6 V14.3 H11.4" fill="none" stroke="#afb1b3" stroke-width="1.3"/></svg>
<svg style="left:1328.3px;top:712.2px;" width="17" height="17" viewBox="0 0 17 17"><circle cx="8.5" cy="8.5" r="8.5" fill="#499c54"/><path d="M9 8 L16 1.5 V8 Z" fill="#3c3f41" opacity="0.0"/></svg>
<svg style="left:1424px;top:739.7px;" width="12" height="13" viewBox="0 0 12 13"><rect x="0" y="5" width="11" height="8" fill="#afb1b3"/><path d="M7 5 V3.2 A2.6 2.6 0 0 1 12.2 3.2 V4.4" fill="none" stroke="#afb1b3" stroke-width="1.4"/></svg>
<span style="left:45.00px;top:8.13px;font-family:'Liberation Sans', sans-serif;font-size:15.5px;color:#bbbbbb;letter-spacing:-0.121px;"><u>F</u>ile</span>
<span style="left:86.00px;top:8.13px;font-family:'Liberation Sans', sans-serif;font-size:15.5px;color:#bbbbbb;letter-spacing:0.320px;"><u>E</u>dit</span>
<span style="left:130.00px;top:8.13px;font-family:'Liberation Sans', sans-serif;font-size:15.5px;color:#bbbbbb;letter-spacing:0.293px;"><u>V</u>iew</span>
<span style="left:181.00px;top:8.13px;font-family:'Liberation Sans', sans-serif;font-size:15.5px;color:#bbbbbb;letter-spacing:0.352px;"><u>N</u>avigate</span>
<span style="left:262.00px;top:8.13px;font-family:'Liberation Sans', sans-serif;font-size:15.5px;color:#bbbbbb;letter-spacing:0.234px;"><u>C</u>ode</span>
<span style="left:316.00px;top:8.13px;font-family:'Liberation Sans', sans-serif;font-size:15.5px;color:#bbbbbb;letter-spacing:0.363px;"><u>R</u>efactor</span>
<span style="left:395.50px;top:8.13px;font-family:'Liberation Sans', sans-serif;font-size:15.5px;color:#bbbbbb;letter-spacing:-0.479px;">R<u>u</u>n</span>
<span style="left:439.00px;top:8.13px;font-family:'Liberation Sans', sans-serif;font-size:15.5px;color:#bbbbbb;letter-spacing:0.662px;"><u>T</u>ools</span>
<span style="left:495.00px;top:8.13px;font-family:'Liberation Sans', sans-serif;font-size:15.5px;color:#bbbbbb;letter-spacing:-1.292px;">VC<u>S</u></span>
<span style="left:538.00px;top:8.13px;font-family:'Liberation Sans', sans-serif;font-size:15.5px;color:#bbbbbb;letter-spacing:0.893px;"><u>W</u>indow</span>
<span style="left:615.00px;top:8.13px;font-family:'Liberation Sans', sans-serif;font-size:15.5px;color:#bbbbbb;letter-spacing:0.527px;"><u>H</u>elp</span>
<span style="left:684.00px;top:8.13px;font-family:'Liberation Sans', sans-serif;font-size:15.5px;color:#808385;letter-spacing:0.314px;">mysql base [...\JetBrains\DataGrip2020.2\projects\mysql base] - console_4</span>
<span style="left:16.00px;top:43.63px;font-family:'Liberation Sans', sans-serif;font-size:15.5px;color:#bbbbbb;letter-spacing:0.101px;">Database Consoles</span>
<span style="left:174.00px;top:43.63px;font-family:'Liberation Sans', sans-serif;font-size:15.5px;color:#bbbbbb;letter-spacing:0.234px;">MySQL - @localhost</span>
<span style="left:363.00px;top:43.63px;font-family:'Liberation Sans', sans-serif;font-size:15.5px;color:#bbbbbb;letter-spacing:0.036px;">console_4</span>
<span style="left:1060.00px;top:44.43px;font-family:'Liberation Sans', sans-serif;font-size:15.5px;color:#bbbbbb;letter-spacing:0.524px;">Add Configuration...</span>
<span style="left:31.50px;top:79.13px;font-family:'Liberation Sans', sans-serif;font-size:15.5px;color:#bbbbbb;letter-spacing:-0.045px;">Database</span>
<span style="left:87.00px;top:145.93px;font-family:'Liberation Sans', sans-serif;font-size:15.5px;color:#bbbbbb;letter-spacing:0.234px;">MySQL - @localhost</span>
<span style="left:246.00px;top:146.80px;font-family:'Liberation Sans', sans-serif;font-size:13px;color:#7d7f81;letter-spacing:-0.234px;">5</span>
<span style="left:109.00px;top:170.93px;font-family:'Liberation Sans', sans-serif;font-size:15.5px;color:#bbbbbb;letter-spacing:-0.076px;">schemas</span>
<span style="left:179.00px;top:171.45px;font-family:'Liberation Sans', sans-serif;font-size:14px;color:#7d7f81;letter-spacing:0.203px;">5</span>
<span style="left:131.00px;top:195.93px;font-family:'Liberation Sans', sans-serif;font-size:15.5px;color:#bbbbbb;letter-spacing:0.385px;">information_schema</span>
<span style="left:131.00px;top:220.93px;font-family:'Liberation Sans', sans-serif;font-size:15.5px;color:#bbbbbb;letter-spacing:0.926px;">item</span>
<span style="left:154.50px;top:245.93px;font-family:'Liberation Sans', sans-serif;font-size:15.5px;color:#bbbbbb;letter-spacing:0.629px;">test</span>
<span style="left:176.00px;top:270.93px;font-family:'Liberation Sans', sans-serif;font-size:15.5px;color:#bbbbbb;letter-spacing:0.461px;">id</span>
<span style="left:202.00px;top:271.45px;font-family:'Liberation Sans', sans-serif;font-size:14px;color:#7d7f81;letter-spacing:0.401px;">int</span>
<span style="left:176.00px;top:295.93px;font-family:'Liberation Sans', sans-serif;font-size:15.5px;color:#bbbbbb;letter-spacing:0.180px;">name</span>
<span style="left:228.50px;top:296.45px;font-family:'Liberation Sans', sans-serif;font-size:14px;color:#7d7f81;letter-spacing:-0.281px;">varchar(20)</span>
<span style="left:176.00px;top:320.93px;font-family:'Liberation Sans', sans-serif;font-size:15.5px;color:#bbbbbb;letter-spacing:0.208px;">age</span>
<span style="left:215.00px;top:321.45px;font-family:'Liberation Sans', sans-serif;font-size:14px;color:#7d7f81;letter-spacing:0.401px;">int</span>
<span style="left:176.00px;top:345.93px;font-family:'Liberation Sans', sans-serif;font-size:15.5px;color:#bbbbbb;letter-spacing:-0.042px;">sex</span>
<span style="left:212.00px;top:346.45px;font-family:'Liberation Sans', sans-serif;font-size:14px;color:#7d7f81;letter-spacing:-0.266px;">char(1)</span>
<span style="left:131.00px;top:370.93px;font-family:'Liberation Sans', sans-serif;font-size:15.5px;color:#bbbbbb;letter-spacing:0.503px;">mysql</span>
<span style="left:549.00px;top:79.13px;font-family:'Liberation Sans', sans-serif;font-size:15.5px;color:#bbbbbb;letter-spacing:0.509px;">console</span>
<span style="left:669.00px;top:79.13px;font-family:'Liberation Sans', sans-serif;font-size:15.5px;color:#bbbbbb;letter-spacing:0.148px;">console_4</span>
<span style="left:674.00px;top:114.65px;font-family:'Liberation Sans', sans-serif;font-size:14px;color:#bbbbbb;letter-spacing:-0.045px;">Tx: Auto</span>
<span style="left:1249.00px;top:114.65px;font-family:'Liberation Sans', sans-serif;font-size:14px;color:#bbbbbb;letter-spacing:0.137px;">item</span>
<span style="left:1334.00px;top:114.65px;font-family:'Liberation Sans', sans-serif;font-size:14px;color:#bbbbbb;letter-spacing:-0.314px;">console_4</span>
<span style="left:519.60px;top:146.58px;font-family:'Liberation Mono', monospace;font-size:16.6px;color:#606366;letter-spacing:0.031px;">1</span>
<span style="left:519.60px;top:173.08px;font-family:'Liberation Mono', monospace;font-size:16.6px;color:#606366;letter-spacing:0.031px;">2</span>
<span style="left:519.60px;top:199.58px;font-family:'Liberation Mono', monospace;font-size:16.6px;color:#a4a3a3;letter-spacing:0.031px;">3</span>
<span style="left:583.20px;top:146.58px;font-family:'Liberation Mono', monospace;font-size:16.6px;color:#cc7832;letter-spacing:0.042px;">alter table </span>
<span style="left:703.20px;top:146.58px;font-family:'Liberation Mono', monospace;font-size:16.6px;color:#a9b7c6;letter-spacing:0.041px;">test </span>
<span style="left:753.20px;top:146.58px;font-family:'Liberation Mono', monospace;font-size:16.6px;color:#cc7832;letter-spacing:0.041px;">drop </span>
<span style="left:803.20px;top:146.58px;font-family:'Liberation Mono', monospace;font-size:16.6px;color:#bc3f3c;letter-spacing:0.041px;">username</span>
<span style="left:883.20px;top:146.58px;font-family:'Liberation Mono', monospace;font-size:16.6px;color:#cc7832;letter-spacing:0.031px;">;</span>
<span style="left:583.20px;top:199.58px;font-family:'Liberation Mono', monospace;font-size:16.6px;color:#cc7832;letter-spacing:0.040px;">select </span>
<span style="left:653.20px;top:202.58px;font-family:'Liberation Mono', monospace;font-size:16.6px;color:#a9b7c6;letter-spacing:0.031px;">*</span>
<span style="left:663.20px;top:199.58px;font-family:'Liberation Mono', monospace;font-size:16.6px;color:#cc7832;letter-spacing:0.041px;">from </span>
<span style="left:713.20px;top:199.58px;font-family:'Liberation Mono', monospace;font-size:16.6px;color:#a9b7c6;letter-spacing:0.039px;">test</span>
<span style="left:753.20px;top:199.58px;font-family:'Liberation Mono', monospace;font-size:16.6px;color:#cc7832;letter-spacing:0.031px;">;</span>
<span style="left:1354.00px;top:149.15px;font-family:'Liberation Sans', sans-serif;font-size:14px;color:#bbbbbb;letter-spacing:0.203px;">1</span>
<span style="left:36.00px;top:403.63px;font-family:'Liberation Sans', sans-serif;font-size:15.5px;color:#bbbbbb;letter-spacing:0.008px;">Services</span>
<span style="left:37.80px;top:438.43px;font-family:'Liberation Sans', sans-serif;font-size:15.5px;color:#bbbbbb;letter-spacing:-0.309px;">Tx</span>
<span style="left:119.50px;top:463.93px;font-family:'Liberation Sans', sans-serif;font-size:15.5px;color:#bbbbbb;letter-spacing:0.206px;">MySQL - @localhost</span>
<span style="left:141.50px;top:488.93px;font-family:'Liberation Sans', sans-serif;font-size:15.5px;color:#bbbbbb;letter-spacing:0.422px;">default</span>
<span style="left:200.00px;top:488.93px;font-family:'Liberation Sans', sans-serif;font-size:15.5px;color:#7d7f81;letter-spacing:-0.141px;">152 ms</span>
<span style="left:141.50px;top:513.93px;font-family:'Liberation Sans', sans-serif;font-size:15.5px;color:#bbbbbb;letter-spacing:0.148px;">console_2</span>
<span style="left:221.00px;top:513.93px;font-family:'Liberation Sans', sans-serif;font-size:15.5px;color:#7d7f81;letter-spacing:-0.044px;">50 ms</span>
<span style="left:164.00px;top:538.93px;font-family:'Liberation Sans', sans-serif;font-size:15.5px;color:#bbbbbb;letter-spacing:0.148px;">console_2</span>
<span style="left:244.50px;top:538.93px;font-family:'Liberation Sans', sans-serif;font-size:15.5px;color:#7d7f81;letter-spacing:-0.144px;">50 ms</span>
<span style="left:141.50px;top:563.93px;font-family:'Liberation Sans', sans-serif;font-size:15.5px;color:#bbbbbb;letter-spacing:0.148px;">console_1</span>
<span style="left:141.50px;top:588.93px;font-family:'Liberation Sans', sans-serif;font-size:15.5px;color:#bbbbbb;letter-spacing:0.148px;">console_3</span>
<span style="left:221.00px;top:588.93px;font-family:'Liberation Sans', sans-serif;font-size:15.5px;color:#7d7f81;letter-spacing:0.026px;">123 ms</span>
<span style="left:164.00px;top:613.93px;font-family:'Liberation Sans', sans-serif;font-size:15.5px;color:#bbbbbb;letter-spacing:0.148px;">console_3</span>
<span style="left:244.50px;top:613.93px;font-family:'Liberation Sans', sans-serif;font-size:15.5px;color:#7d7f81;letter-spacing:0.026px;">123 ms</span>
<span style="left:141.50px;top:638.93px;font-family:'Liberation Sans', sans-serif;font-size:15.5px;color:#bbbbbb;letter-spacing:0.148px;">console_4</span>
<span style="left:221.00px;top:638.93px;font-family:'Liberation Sans', sans-serif;font-size:15.5px;color:#7d7f81;letter-spacing:-0.044px;">35 ms</span>
<span style="left:164.00px;top:663.93px;font-family:'Liberation Sans', sans-serif;font-size:15.5px;color:#bbbbbb;letter-spacing:0.148px;">console_4</span>
<span style="left:244.50px;top:663.93px;font-family:'Liberation Sans', sans-serif;font-size:15.5px;color:#7d7f81;letter-spacing:-0.144px;">35 ms</span>
<span style="left:141.50px;top:688.93px;font-family:'Liberation Sans', sans-serif;font-size:15.5px;color:#bbbbbb;letter-spacing:0.366px;">console</span>
<span style="left:514.50px;top:436.15px;font-family:'Liberation Sans', sans-serif;font-size:14px;color:#bbbbbb;letter-spacing:0.328px;">Output</span>
<span style="left:609.00px;top:436.15px;font-family:'Liberation Sans', sans-serif;font-size:14px;color:#bbbbbb;letter-spacing:-0.101px;">item.test</span>
<span style="left:549.00px;top:472.65px;font-family:'Liberation Sans', sans-serif;font-size:14px;color:#bbbbbb;letter-spacing:-0.206px;">0 rows</span>
<span style="left:809.50px;top:472.65px;font-family:'Liberation Sans', sans-serif;font-size:14px;color:#bbbbbb;letter-spacing:0.018px;">Tx: Auto</span>
<span style="left:1042.00px;top:472.65px;font-family:'Liberation Sans', sans-serif;font-size:14px;color:#bbbbbb;letter-spacing:-0.339px;">DDL</span>
<span style="left:1134.00px;top:472.65px;font-family:'Liberation Sans', sans-serif;font-size:14px;color:#bbbbbb;letter-spacing:-0.258px;">Comma-...d (CSV)</span>
<span style="left:549.50px;top:506.74px;font-family:'Liberation Mono', monospace;font-size:16px;color:#a9b7c6;letter-spacing:-0.102px;">id</span>
<span style="left:627.00px;top:506.74px;font-family:'Liberation Mono', monospace;font-size:16px;color:#a9b7c6;letter-spacing:0.023px;">name</span>
<span style="left:786.50px;top:506.74px;font-family:'Liberation Mono', monospace;font-size:16px;color:#a9b7c6;letter-spacing:-0.104px;">age</span>
<span style="left:875.00px;top:506.74px;font-family:'Liberation Mono', monospace;font-size:16px;color:#a9b7c6;letter-spacing:0.062px;">sex</span>
<span style="left:64.00px;top:710.65px;font-family:'Liberation Sans', sans-serif;font-size:14px;color:#bbbbbb;letter-spacing:-0.246px;"><u>6</u>: Problems</span>
<span style="left:182.00px;top:710.65px;font-family:'Liberation Sans', sans-serif;font-size:14px;color:#bbbbbb;letter-spacing:-0.301px;">TODO</span>
<span style="left:267.50px;top:710.65px;font-family:'Liberation Sans', sans-serif;font-size:14px;color:#dddddd;letter-spacing:-0.432px;"><u>8</u>: Services</span>
<span style="left:1350.00px;top:710.65px;font-family:'Liberation Sans', sans-serif;font-size:14px;color:#bbbbbb;letter-spacing:-0.340px;">Event Log</span>
<span style="left:35.00px;top:735.63px;font-family:'Liberation Sans', sans-serif;font-size:15.5px;color:#bbbbbb;letter-spacing:0.499px;">Connected (moments ago)</span>
<span style="left:1118.00px;top:735.63px;font-family:'Liberation Sans', sans-serif;font-size:15.5px;color:#bbbbbb;letter-spacing:-0.057px;">18 chars</span>
<span style="left:1197.00px;top:735.63px;font-family:'Liberation Sans', sans-serif;font-size:15.5px;color:#bbbbbb;letter-spacing:-0.188px;">3:1</span>
<span style="left:1236.00px;top:735.63px;font-family:'Liberation Sans', sans-serif;font-size:15.5px;color:#bbbbbb;letter-spacing:-1.121px;">CRLF</span>
<span style="left:1287.00px;top:735.63px;font-family:'Liberation Sans', sans-serif;font-size:15.5px;color:#bbbbbb;letter-spacing:-0.184px;">UTF-8</span>
<span style="left:1345.00px;top:735.63px;font-family:'Liberation Sans', sans-serif;font-size:15.5px;color:#bbbbbb;letter-spacing:-0.131px;">4 spaces</span>
<span style="left:0;top:0;font-family:'Liberation Sans', sans-serif;font-size:14px;color:#bbbbbb;letter-spacing:-0.382px;text-underline-offset:1px;transform-origin:0 0;transform:translate(6.1px,156.2px) rotate(-90deg);"><u>1</u>: Database</span>
<span style="left:0;top:0;font-family:'Liberation Sans', sans-serif;font-size:14px;color:#bbbbbb;letter-spacing:-0.431px;transform-origin:0 0;transform:translate(5.4px,669.2px) rotate(-90deg);">Favorites</span>
<span style="left:0;top:0;font-family:'Liberation Sans', sans-serif;font-size:14px;color:#bbbbbb;letter-spacing:-0.603px;text-underline-offset:1px;transform-origin:0 0;transform:translate(1445.8px,104.6px) rotate(90deg);"><u>2</u>: Files</span>
<span style="left:0;top:0;font-family:'Liberation Sans', sans-serif;font-size:14px;color:#bbbbbb;letter-spacing:-0.037px;text-underline-offset:1px;transform-origin:0 0;transform:translate(1444.8px,619.3px) rotate(90deg);"><u>Z</u>: Structure</span>
<span style="left:1281.00px;top:713.98px;font-family:'Liberation Serif','Noto Serif CJK SC',serif;font-size:52px;color:rgba(226,24,34,0.82);letter-spacing:-0.005px;font-weight:300;">萤火虫</span>
<span style="left:1204.50px;top:729.42px;font-family:'Liberation Sans', sans-serif;font-size:19px;color:rgba(255,255,255,0.82);letter-spacing:-1.211px;z-index:5;text-shadow:0 0 2px #333,0 0 1px #000;">CSDN</span>
<span style="left:1260.70px;top:729.42px;font-family:'Liberation Sans', sans-serif;font-size:19px;color:rgba(255,255,255,0.82);letter-spacing:0.476px;z-index:5;text-shadow:0 0 2px #333,0 0 1px #000;">@weixin_43294936</span>
<span style="left:14.60px;top:6.17px;font-family:'Liberation Sans', sans-serif;font-size:7px;color:#ffffff;letter-spacing:-0.050px;font-weight:bold;">DG</span>
<span style="left:286.20px;top:116.85px;font-family:'Liberation Sans', sans-serif;font-size:8.5px;color:#afb1b3;letter-spacing:0.194px;font-weight:bold;">QL</span>
<span style="left:602.60px;top:113.27px;font-family:'Liberation Sans', sans-serif;font-size:12.5px;color:#8f5f18;letter-spacing:-0.153px;">p</span>
<span style="left:897.40px;top:467.60px;font-family:'Liberation Sans', sans-serif;font-size:7.5px;color:#5c5f61;letter-spacing:1.578px;font-weight:bold;">DB</span>
<span style="left:1105.50px;top:471.15px;font-family:'Liberation Sans', sans-serif;font-size:14px;color:#afb1b3;letter-spacing:1.203px;">»</span>
<span style="left:1333.60px;top:711.22px;font-family:'Liberation Sans', sans-serif;font-size:11.5px;color:#ffffff;letter-spacing:-0.006px;font-weight:bold;">1</span>
<div style="left:1352.5px;top:714.5px;width:41.5px;height:20px;border-radius:50%;background:rgba(208,36,46,0.72)"></div>
<span style="left:1360px;top:714.5px;font-family:'Liberation Sans',sans-serif;font-size:14px;font-style:italic;font-weight:bold;color:rgba(255,255,255,0.88);letter-spacing:-0.3px">php</span>
</div></body></html>
